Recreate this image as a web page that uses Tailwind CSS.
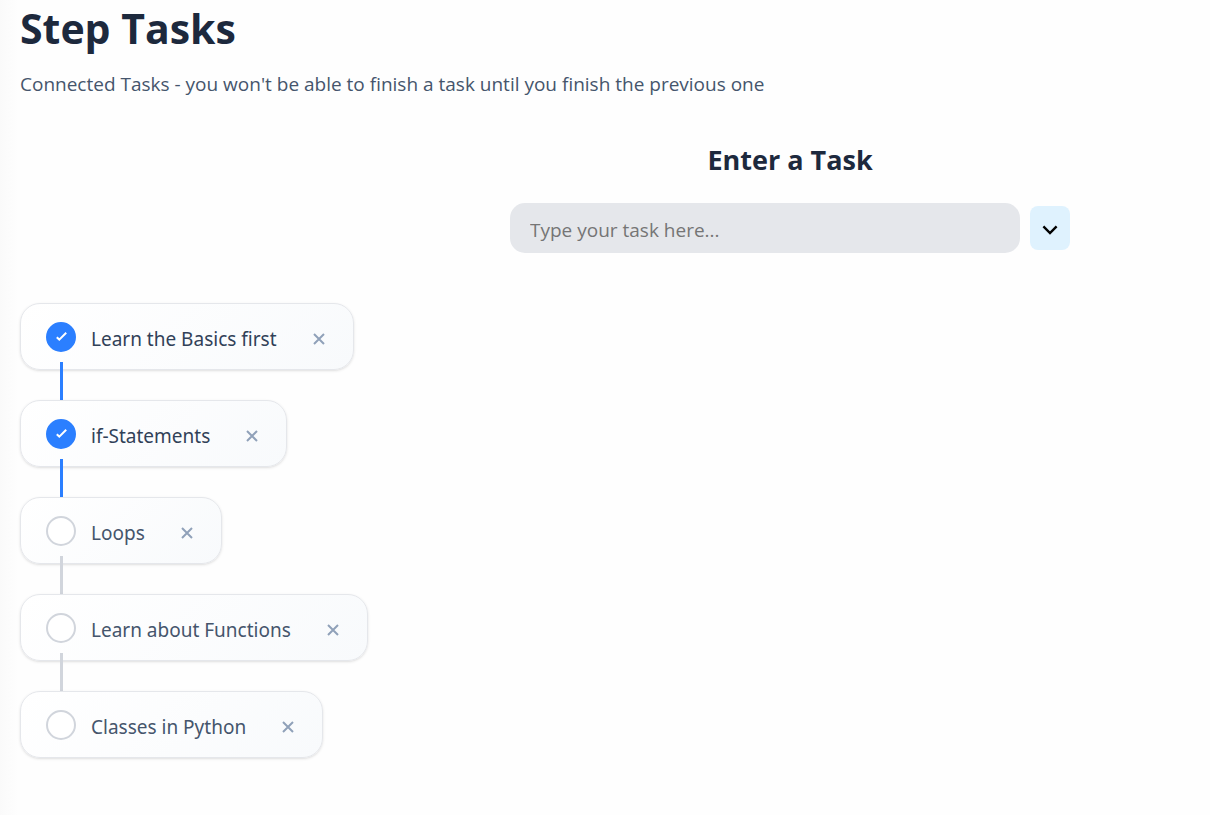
<!DOCTYPE html>
<html lang="en">
<head>
<meta charset="utf-8">
<meta name="viewport" content="width=device-width, initial-scale=1">
<title>Step Tasks</title>
<script src="https://cdn.jsdelivr.net/npm/@tailwindcss/browser@4"></script>
</head>
<body class="min-h-screen bg-[linear-gradient(to_right,#fafafa,#fefefe_18px)] font-['Open_Sans','Noto_Sans',sans-serif] text-slate-600">
<main class="px-5 pb-14">
  <h1 class="text-[41px] leading-[56px] font-bold text-slate-800">Step Tasks</h1>
  <p class="mt-3 text-[19px] leading-8">Connected Tasks - you won't be able to finish a task until you finish the previous one</p>

  <form class="mt-10 ml-[490px] max-w-[560px]">
    <h2 class="text-center text-[27px] leading-10 font-bold text-slate-800"><label for="task">Enter a Task</label></h2>
    <div class="mt-[23px] flex items-center gap-2.5">
      <input id="task" type="text" placeholder="Type your task here..." class="h-[50px] min-w-0 flex-1 rounded-[15px] bg-gray-200 px-5 pt-1 text-[19px] text-slate-700 outline-none placeholder:text-[#757575]">
      <button type="button" aria-label="Show options" class="flex h-11 w-10 items-center justify-center rounded-lg bg-[#dff2fe] pt-1 text-black">
        <svg class="h-5 w-5" viewBox="0 0 20 20" fill="none" stroke="currentColor" stroke-width="2.4"><path d="M3.4 6.4 10 13l6.600-6.600"/></svg>
      </button>
    </div>
  </form>

  <ul class="mt-[50px] flex flex-col items-start gap-[30px] font-['Noto_Sans','Open_Sans',sans-serif] text-[19px] leading-[26px]">
    <li class="relative flex items-center rounded-[20px] border border-gray-200 bg-[linear-gradient(135deg,#ffffff,#f8fafc)] pt-[18px] pr-6 pb-[17px] pl-[25px] shadow-sm">
      <input id="t1" type="checkbox" checked class="h-[30px] w-[30px] appearance-none rounded-full border-2 border-gray-300 bg-white checked:border-blue-500 checked:bg-blue-500">
      <svg class="pointer-events-none absolute top-[26px] left-[33px] h-[14px] w-[14px]" viewBox="0 0 14 14" fill="none" stroke="white" stroke-width="2"><path d="m2.800 7.200 2.500 2.500 6.900-6.900"/></svg>
      <label for="t1" class="pt-1 pl-[15px] text-slate-700">Learn the Basics first</label>
      <button type="button" aria-label="Delete Learn the Basics first" class="ml-8 flex h-5 w-5 items-center justify-center pt-1 text-slate-400"><svg class="h-3 w-3" viewBox="0 0 12 12" fill="none" stroke="currentColor" stroke-width="2"><path d="m1 1 10 10M11 1 1 11"/></svg></button>
      <span class="absolute top-[58px] left-[39px] h-[38px] w-[3px] bg-blue-500"></span>
    </li>
    <li class="relative flex items-center rounded-[20px] border border-gray-200 bg-[linear-gradient(135deg,#ffffff,#f8fafc)] pt-[18px] pr-6 pb-[17px] pl-[25px] shadow-sm">
      <input id="t2" type="checkbox" checked class="h-[30px] w-[30px] appearance-none rounded-full border-2 border-gray-300 bg-white checked:border-blue-500 checked:bg-blue-500">
      <svg class="pointer-events-none absolute top-[26px] left-[33px] h-[14px] w-[14px]" viewBox="0 0 14 14" fill="none" stroke="white" stroke-width="2"><path d="m2.800 7.200 2.500 2.500 6.900-6.900"/></svg>
      <label for="t2" class="pt-1 pl-[15px] text-slate-700">if-Statements</label>
      <button type="button" aria-label="Delete if-Statements" class="ml-8 flex h-5 w-5 items-center justify-center pt-1 text-slate-400"><svg class="h-3 w-3" viewBox="0 0 12 12" fill="none" stroke="currentColor" stroke-width="2"><path d="m1 1 10 10M11 1 1 11"/></svg></button>
      <span class="absolute top-[58px] left-[39px] h-[38px] w-[3px] bg-blue-500"></span>
    </li>
    <li class="relative flex items-center rounded-[20px] border border-gray-200 bg-[linear-gradient(135deg,#ffffff,#f8fafc)] pt-[18px] pr-6 pb-[17px] pl-[25px] shadow-sm">
      <input id="t3" type="checkbox" class="h-[30px] w-[30px] appearance-none rounded-full border-2 border-gray-300 bg-white checked:border-blue-500 checked:bg-blue-500">
      <label for="t3" class="pt-1 pl-[15px]">Loops</label>
      <button type="button" aria-label="Delete Loops" class="ml-8 flex h-5 w-5 items-center justify-center pt-1 text-slate-400"><svg class="h-3 w-3" viewBox="0 0 12 12" fill="none" stroke="currentColor" stroke-width="2"><path d="m1 1 10 10M11 1 1 11"/></svg></button>
      <span class="absolute top-[58px] left-[39px] h-[38px] w-[3px] bg-gray-300"></span>
    </li>
    <li class="relative flex items-center rounded-[20px] border border-gray-200 bg-[linear-gradient(135deg,#ffffff,#f8fafc)] pt-[18px] pr-6 pb-[17px] pl-[25px] shadow-sm">
      <input id="t4" type="checkbox" class="h-[30px] w-[30px] appearance-none rounded-full border-2 border-gray-300 bg-white checked:border-blue-500 checked:bg-blue-500">
      <label for="t4" class="pt-1 pl-[15px]">Learn about Functions</label>
      <button type="button" aria-label="Delete Learn about Functions" class="ml-8 flex h-5 w-5 items-center justify-center pt-1 text-slate-400"><svg class="h-3 w-3" viewBox="0 0 12 12" fill="none" stroke="currentColor" stroke-width="2"><path d="m1 1 10 10M11 1 1 11"/></svg></button>
      <span class="absolute top-[58px] left-[39px] h-[38px] w-[3px] bg-gray-300"></span>
    </li>
    <li class="relative flex items-center rounded-[20px] border border-gray-200 bg-[linear-gradient(135deg,#ffffff,#f8fafc)] pt-[18px] pr-6 pb-[17px] pl-[25px] shadow-sm">
      <input id="t5" type="checkbox" class="h-[30px] w-[30px] appearance-none rounded-full border-2 border-gray-300 bg-white checked:border-blue-500 checked:bg-blue-500">
      <label for="t5" class="pt-1 pl-[15px]">Classes in Python</label>
      <button type="button" aria-label="Delete Classes in Python" class="ml-8 flex h-5 w-5 items-center justify-center pt-1 text-slate-400"><svg class="h-3 w-3" viewBox="0 0 12 12" fill="none" stroke="currentColor" stroke-width="2"><path d="m1 1 10 10M11 1 1 11"/></svg></button>
    </li>
  </ul>
</main>
</body>
</html>
